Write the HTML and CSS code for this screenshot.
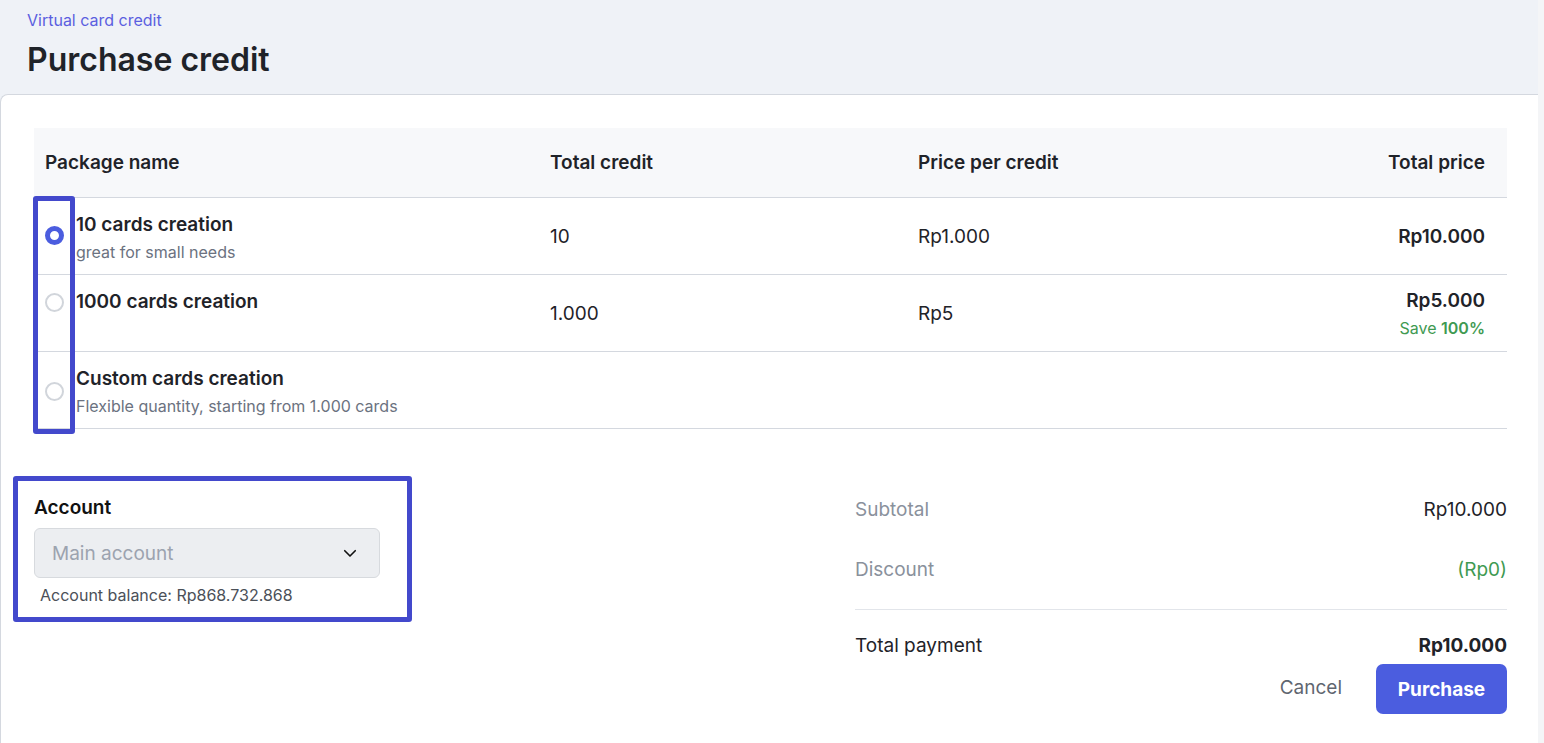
FILE: index.html
```html
<!DOCTYPE html>
<html lang="en">
<head>
    <meta charset="UTF-8">
    <title>Purchase credit</title>
    <link rel="stylesheet" href="styles.css">
</head>
<body>
<div class="page">
    <div class="pageHeader">
        <a class="crumb" href="#">Virtual card credit</a>
        <h1 class="pageTitle">Purchase credit</h1>
    </div>

    <div class="card">
        <div class="packTable">
            <div class="packRow packHead">
                <div class="cell first">Package name</div>
                <div class="cell">Total credit</div>
                <div class="cell">Price per credit</div>
                <div class="cell right">Total price</div>
            </div>

            <div class="packRow">
                <div class="cell pack">
                    <span class="radio checked"></span>
                    <div class="packText">
                        <div class="packName">10 cards creation</div>
                        <div class="packDesc">great for small needs</div>
                    </div>
                </div>
                <div class="cell">10</div>
                <div class="cell">Rp1.000</div>
                <div class="cell right"><b>Rp10.000</b></div>
            </div>

            <div class="packRow">
                <div class="cell pack">
                    <span class="radio"></span>
                    <div class="packText">
                        <div class="packName">1000 cards creation</div>
                    </div>
                </div>
                <div class="cell">1.000</div>
                <div class="cell">Rp5</div>
                <div class="cell right">
                    <b>Rp5.000</b>
                    <div class="save">Save <b>100%</b></div>
                </div>
            </div>

            <div class="packRow">
                <div class="cell pack">
                    <span class="radio"></span>
                    <div class="packText">
                        <div class="packName">Custom cards creation</div>
                        <div class="packDesc">Flexible quantity, starting from 1.000 cards</div>
                    </div>
                </div>
                <div class="cell"></div>
                <div class="cell"></div>
                <div class="cell"></div>
            </div>
        </div>

        <div class="bottom">
            <div class="account">
                <div class="fieldLabel">Account</div>
                <div class="select">
                    <span>Main account</span>
                    <svg width="18" height="18" viewBox="0 0 24 24" fill="none" stroke="#111" stroke-width="2.2" stroke-linecap="round" stroke-linejoin="round"><path d="M5 9l7 7 7-7"/></svg>
                </div>
                <div class="balance">Account balance: Rp868.732.868</div>
            </div>

            <div class="summary">
                <div class="sumRow">
                    <span class="sumLabel">Subtotal</span>
                    <span>Rp10.000</span>
                </div>
                <div class="sumRow discount">
                    <span class="sumLabel">Discount</span>
                    <span class="green">(Rp0)</span>
                </div>
                <div class="sumRow total">
                    <span>Total payment</span>
                    <b>Rp10.000</b>
                </div>
                <div class="actions">
                    <button class="cancelBtn">Cancel</button>
                    <button class="purchaseBtn">Purchase</button>
                </div>
            </div>
        </div>

        <!-- highlight marks -->
        <div class="mark markRadios"></div>
        <div class="mark markAccount"></div>
    </div>
</div>
</body>
</html>
```

FILE: styles.css
```css
* {
    box-sizing: border-box;
}

body {
    margin: 0;
    background: #f4f5f7;
    font-family: Inter, "Noto Sans", sans-serif;
    color: #1f2329;
}

.page {
    width: 1538px;
    min-height: 743px;
    background: #eff2f7;
}

.pageHeader {
    padding: 10px 27px 0;
    height: 94px;
}

.crumb {
    display: block;
    font-size: 16px;
    line-height: 21px;
    color: #5b5fe0;
    text-decoration: none;
}

.pageTitle {
    margin: 8px 0 0;
    font-size: 32px;
    line-height: 42px;
    font-weight: 600;
    color: #1f2329;
}

.card {
    position: relative;
    background: #fff;
    border: 1px solid #d4d8df;
    border-right: none;
    border-radius: 8px 0 0 0;
    padding: 33px 31px 40px 33px;
    min-height: 649px;
}

.packRow {
    display: grid;
    grid-template-columns: 505px 368px 1fr 220px;
    align-items: center;
    min-height: 77px;
    border-bottom: 1px solid #d4d8df;
    font-size: 19px;
}

.packHead {
    min-height: 70px;
    background: #f7f8fa;
    font-weight: 600;
}

.cell {
    padding-left: 11px;
}

.cell.right {
    text-align: right;
    padding-right: 22px;
}

.cell.right b {
    font-weight: 600;
}

.pack {
    align-self: start;
    display: flex;
    align-items: center;
    gap: 12px;
    padding-top: 14px;
    padding-left: 11px;
}

.radio {
    width: 19px;
    height: 19px;
    border-radius: 50%;
    border: 2px solid #d1d5db;
    flex-shrink: 0;
}

.radio.checked {
    border: 5px solid #4b5ddf;
    margin-top: -5px;
}

.packName {
    font-weight: 600;
    line-height: 26px;
}

.packDesc {
    margin-top: 3px;
    font-size: 16px;
    line-height: 22px;
    color: #6b7280;
}

.save {
    margin-top: 6px;
    font-size: 16px;
    color: #3f9a52;
}

.save b {
    font-weight: 600;
}

.bottom {
    display: flex;
    justify-content: space-between;
    padding-top: 67px;
}

.account {
    width: 346px;
}

.fieldLabel {
    font-size: 19px;
    font-weight: 600;
    color: #111;
    line-height: 24px;
}

.select {
    display: flex;
    align-items: center;
    justify-content: space-between;
    height: 50px;
    margin-top: 8px;
    padding: 0 20px 0 17px;
    background: #eceef1;
    border: 1px solid #d7dade;
    border-radius: 6px;
    font-size: 19px;
    color: #9ca3af;
}

.balance {
    margin-top: 7px;
    padding-left: 6px;
    font-size: 16px;
    color: #4b5058;
}

.summary {
    width: 652px;
    margin-top: 2px;
}

.sumRow {
    display: flex;
    justify-content: space-between;
    font-size: 19px;
    line-height: 24px;
    margin-bottom: 36px;
}

.sumRow.discount {
    margin-bottom: 27px;
}

.sumLabel {
    color: #8a919c;
}

.green {
    color: #3f9a52;
}

.sumRow.total {
    border-top: 1px solid #e2e5ea;
    padding-top: 24px;
    margin-bottom: 6px;
}

.sumRow.total b {
    font-weight: 700;
}

.actions {
    display: flex;
    justify-content: flex-end;
    align-items: center;
    gap: 34px;
}

.cancelBtn {
    border: none;
    background: none;
    padding: 0 0 3px;
    font-family: inherit;
    font-size: 19px;
    color: #5f6670;
}

.purchaseBtn {
    width: 131px;
    height: 50px;
    border: none;
    border-radius: 7px;
    background: #4b5ddf;
    color: #fff;
    font-family: inherit;
    font-size: 19px;
    font-weight: 700;
}

.mark {
    position: absolute;
    border: 5px solid #4349cc;
    border-radius: 3px;
}

.markRadios {
    left: 32px;
    top: 101px;
    width: 42px;
    height: 238px;
}

.markAccount {
    left: 12px;
    top: 381px;
    width: 399px;
    height: 146px;
}
```
